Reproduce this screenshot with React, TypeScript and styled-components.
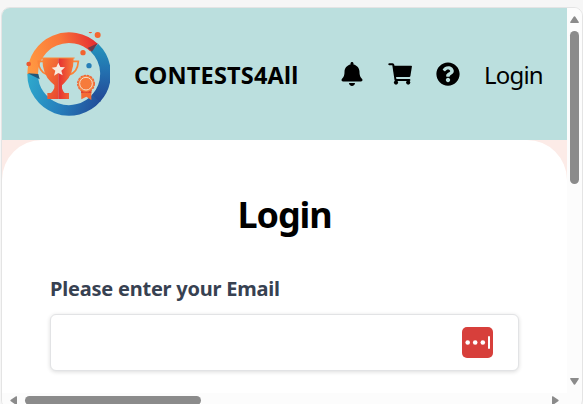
import React from "react";
import styled, { createGlobalStyle } from "styled-components";
import { FaBell, FaQuestionCircle } from "react-icons/fa";

const GlobalStyle = createGlobalStyle`
  * { box-sizing: border-box; }
  html, body { margin: 0; height: 100%; overflow: hidden; }
  body {
    background: #f6f6f6;
    font-family: "Noto Sans", "Open Sans", sans-serif;
    color: #000;
  }
`;

const Viewport = styled.div`
  width: 583px;
  height: 404px;
  padding: 7px 0 0 1px;
  overflow: hidden;
`;

const Frame = styled.div`
  width: 582px;
  height: 402px;
  display: grid;
  grid-template-columns: 565px 15px;
  grid-template-rows: 385px 15px;
  border: 1px solid #e4e4e4;
  border-radius: 9px;
  background: #fcfcfc;
  overflow: hidden;
`;

const Page = styled.div`
  display: flex;
  flex-direction: column;
  background: #fcebe7;
  overflow: hidden;
`;

const Header = styled.header`
  flex: none;
  height: 132px;
  padding: 0 24px;
  display: flex;
  align-items: center;
  background: #bbdfde;
`;

const LogoSvg = styled.svg`
  flex: none;
  width: 84px;
  height: 84px;
`;

const Brand = styled.span`
  flex: none;
  width: 230px;
  padding: 2px 0 0 24px;
  font-size: 23.5px;
  font-weight: 700;
  line-height: 32px;
  letter-spacing: 0.18px;
  white-space: nowrap;
`;

const Nav = styled.nav`
  display: flex;
  align-items: center;
  gap: 24px;
  font-size: 24px;
  line-height: 32px;

  svg { display: block; flex: none; }
`;

const NavLink = styled.a`
  padding-top: 2px;
  letter-spacing: -0.8px;
`;

const Card = styled.main`
  flex: 1;
  padding: 51px 48px 0;
  border-radius: 40px 40px 0 0;
  background: #fff;
`;

const Title = styled.h1`
  margin: 0;
  text-align: center;
  font-size: 36px;
  font-weight: 700;
  line-height: 48px;
  letter-spacing: -1.1px;
`;

const Label = styled.label`
  display: block;
  margin-top: 34px;
  color: #374151;
  font-size: 20px;
  font-weight: 700;
  line-height: 32px;
  letter-spacing: -0.22px;
  white-space: nowrap;
`;

const Field = styled.div`
  width: 469px;
  height: 57px;
  margin-top: 9px;
  padding-right: 25px;
  display: flex;
  align-items: center;
  justify-content: flex-end;
  border: 1px solid #e2e3e5;
  border-radius: 6px;
  background: #fff;
  box-shadow: 0 1px 4px rgba(0, 0, 0, 0.14);
`;

const Track = styled.div<{ $horizontal?: boolean }>`
  display: flex;
  flex-direction: ${(p) => (p.$horizontal ? "row" : "column")};
  align-items: center;
  justify-content: space-between;
  padding: ${(p) => (p.$horizontal ? "0 8px 0 8px" : "8px 0 8px")};
  background: #fcfcfc;

  svg { flex: none; display: block; }
`;

const Thumb = styled.div<{ $horizontal?: boolean }>`
  width: ${(p) => (p.$horizontal ? "176px" : "9px")};
  height: ${(p) => (p.$horizontal ? "9px" : "153px")};
  margin: ${(p) => (p.$horizontal ? "0 auto 0 8px" : "8px 0 auto")};
  border-radius: 5px;
  background: #8b8b8b;
`;

const Arrow = ({ angle }: { angle: number }) => (
  <svg
    width={angle % 180 ? 7 : 9}
    height={angle % 180 ? 9 : 7}
    viewBox={angle % 180 ? "1 0 7 9" : "0 1 9 7"}
  >
    <path
      d="M4.5 2.4 7.8 7.2H1.2Z"
      fill="#8b8b8b"
      stroke="#8b8b8b"
      strokeWidth="2"
      strokeLinejoin="round"
      transform={`rotate(${angle} 4.5 4.5)`}
    />
  </svg>
);

const CartIcon = () => (
  <svg width="24" height="24" viewBox="0 0 24 24">
    <path d="M1.3 2.3H4.6Q5.2 2.3 5.3 3L7.5 17.9H21.4" fill="none" stroke="#000" strokeWidth="2" strokeLinecap="round" strokeLinejoin="round" />
    <path d="M5 3.7H23.2Q24 3.7 23.9 4.6L22.4 14Q22.2 14.9 21.3 14.9H6.8Z" />
    <circle cx="8" cy="20.6" r="2.1" />
    <circle cx="20.2" cy="20.6" r="2.1" />
  </svg>
);

const Logo = () => (
  <LogoSvg viewBox="33 36 252 252">
    <defs>
      <linearGradient id="warm" gradientUnits="userSpaceOnUse" x1="45" y1="130" x2="245" y2="80">
        <stop offset="0" stopColor="#ff9741" />
        <stop offset=".5" stopColor="#fa7739" />
        <stop offset="1" stopColor="#e52e32" />
      </linearGradient>
      <linearGradient id="cool" gradientUnits="userSpaceOnUse" x1="45" y1="140" x2="270" y2="220">
        <stop offset="0" stopColor="#2faacd" />
        <stop offset=".5" stopColor="#2681bd" />
        <stop offset="1" stopColor="#214b98" />
      </linearGradient>
      <linearGradient id="coolSide" x1="0" y1="0" x2="0" y2="1">
        <stop offset="0" stopColor="#2490bb" />
        <stop offset=".5" stopColor="#236eae" />
        <stop offset="1" stopColor="#224c98" />
      </linearGradient>
      <linearGradient id="cup" x1="0" y1="0" x2="1" y2="1">
        <stop offset="0" stopColor="#fb8638" />
        <stop offset="1" stopColor="#e84630" />
      </linearGradient>
      <linearGradient id="cupRight" x1="0" y1="0" x2="1" y2="0">
        <stop offset="0" stopColor="#e52f31" />
        <stop offset="1" stopColor="#f77b39" />
      </linearGradient>
    </defs>
    <g fill="none" strokeWidth="32">
      <path d="M53 162A109 109 0 0 0 245 233" stroke="url(#cool)" />
      <path d="M238 83A109 109 0 0 1 243 235" stroke="url(#coolSide)" />
      <path d="M53 162A109 109 0 0 1 237 83" stroke="url(#warm)" />
    </g>
    <path d="M248 70 218 84 231 95Z" fill="#693b4d" />
    <path d="M38 160 70 162 74 178Z" fill="#245778" />
    <path d="M88 124H70Q72 154 94 163M170 124H190Q188 157 162 165" fill="none" stroke="#fa8438" strokeWidth="5" />
    <path d="M82 114H130V237H97V219H108Q113 216 118 204V195L108 186Q82 162 82 114Z" fill="url(#cup)" />
    <path d="M130 114H176Q176 164 148 189L141 196V205Q144 216 149 219H162V237H130Z" fill="url(#cupRight)" />
    <path d="M80 114H179" stroke="#fa8a3a" strokeWidth="3" />
    <path d="m130 128 6 13 14 1-11 10 4 14-13-7-13 8 4-15-11-9 14-2Z" fill="#f7eadf" />
    <path d="M198 203H229V240L214 230 199 238Z" fill="#f36b35" />
    <path d="M198 209H229V219H198Z" fill="#dc422f" />
    <circle cx="213" cy="191" r="25" fill="#f6863f" stroke="#ee653b" strokeWidth="4" strokeDasharray="7 3" />
    <circle cx="213" cy="191" r="19" fill="#f67b3b" stroke="#f3ddcd" strokeWidth="3" />
    <circle cx="204" cy="98" r="8" fill="#f3632f" />
    <circle cx="222" cy="137" r="8" fill="#277fb8" />
    <circle cx="248" cy="45" r="9" fill="#f4662f" />
    <circle cx="226" cy="35" r="5" fill="#ef5934" />
    <circle cx="41" cy="132" r="7" fill="#ec5830" />
  </LogoSvg>
);

const PasswordBadge = () => (
  <svg width="31" height="31" viewBox="0 0 31 31">
    <rect width="31" height="31" rx="5" fill="#d73f3b" />
    <circle cx="5.7" cy="15.5" r="2.3" fill="#fff" />
    <circle cx="13.2" cy="15.5" r="2.3" fill="#fff" />
    <circle cx="20.8" cy="15.5" r="2.3" fill="#fff" />
    <rect x="26" y="9" width="2" height="13" rx="1" fill="#fff" />
  </svg>
);

export default function App() {
  return (
    <Viewport>
      <GlobalStyle />
      <Frame>
        <Page>
          <Header>
            <Logo />
            <Brand>CONTESTS4All</Brand>
            <Nav>
              <FaBell />
              <CartIcon />
              <FaQuestionCircle />
              <NavLink>Login</NavLink>
            </Nav>
          </Header>
          <Card>
            <Title>Login</Title>
            <Label>Please enter your Email</Label>
            <Field>
              <PasswordBadge />
            </Field>
          </Card>
        </Page>
        <Track>
          <Arrow angle={0} />
          <Thumb />
          <Arrow angle={180} />
        </Track>
        <Track $horizontal>
          <Arrow angle={-90} />
          <Thumb $horizontal />
          <Arrow angle={90} />
        </Track>
      </Frame>
    </Viewport>
  );
}
